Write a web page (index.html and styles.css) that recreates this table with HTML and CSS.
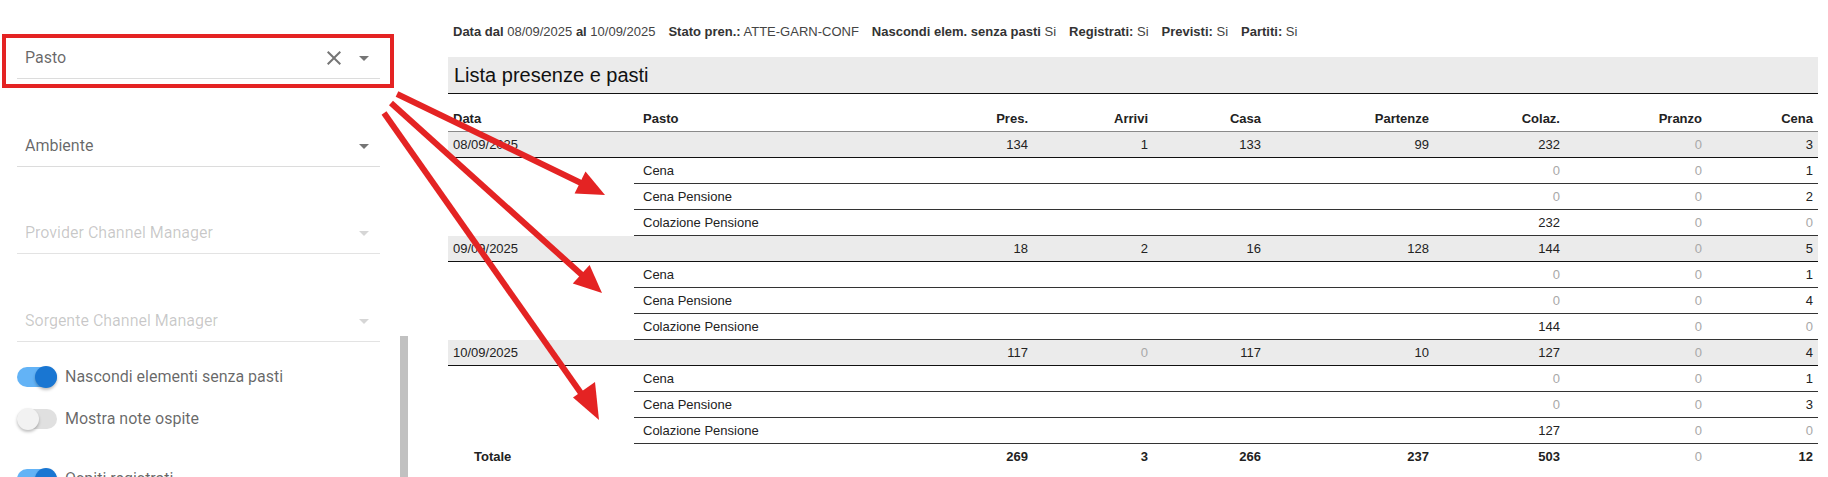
FILE: index.html
```html
<!DOCTYPE html>
<html lang="it">
<head>
<meta charset="utf-8">
<title>Lista presenze e pasti</title>
<link rel="stylesheet" href="styles.css">
</head>
<body>
<div class="page">
  <aside class="sidebar">
    <div class="field">
      <span class="field-label">Pasto</span>
      <svg class="icon icon-clear" viewBox="0 0 24 24" width="24" height="24"><path d="M19 6.41L17.59 5 12 10.59 6.41 5 5 6.41 10.59 12 5 17.59 6.41 19 12 13.41 17.59 19 19 17.59 13.41 12z"/></svg>
      <svg class="icon icon-caret" viewBox="0 0 24 24" width="24" height="24"><path d="M7 10l5 5 5-5z"/></svg>
    </div>
    <div class="field">
      <span class="field-label">Ambiente</span>
      <svg class="icon icon-caret" viewBox="0 0 24 24" width="24" height="24"><path d="M7 10l5 5 5-5z"/></svg>
    </div>
    <div class="field disabled">
      <span class="field-label">Provider Channel Manager</span>
      <svg class="icon icon-caret" viewBox="0 0 24 24" width="24" height="24"><path d="M7 10l5 5 5-5z"/></svg>
    </div>
    <div class="field disabled">
      <span class="field-label">Sorgente Channel Manager</span>
      <svg class="icon icon-caret" viewBox="0 0 24 24" width="24" height="24"><path d="M7 10l5 5 5-5z"/></svg>
    </div>
    <div class="switch on first">
      <span class="track"><span class="thumb"></span></span>
      <span class="switch-label">Nascondi elementi senza pasti</span>
    </div>
    <div class="switch off">
      <span class="track"><span class="thumb"></span></span>
      <span class="switch-label">Mostra note ospite</span>
    </div>
    <div class="switch on spaced">
      <span class="track"><span class="thumb"></span></span>
      <span class="switch-label">Ospiti registrati</span>
    </div>
    <div class="scroll-thumb"></div>
  </aside>

  <main class="report">
    <div class="filters">
      <span class="filter"><b>Data dal</b> 08/09/2025 <b>al</b> 10/09/2025</span>
      <span class="filter"><b>Stato pren.:</b> ATTE-GARN-CONF</span>
      <span class="filter"><b>Nascondi elem. senza pasti</b> Si</span>
      <span class="filter"><b>Registrati:</b> Si</span>
      <span class="filter"><b>Previsti:</b> Si</span>
      <span class="filter"><b>Partiti:</b> Si</span>
    </div>
    <div class="report-title">Lista presenze e pasti</div>
    <table class="report-table">
      <colgroup>
        <col class="c-data"><col class="c-pasto"><col class="c-pres"><col class="c-arrivi"><col class="c-casa"><col class="c-part"><col class="c-colaz"><col class="c-pranzo"><col class="c-cena">
      </colgroup>
      <thead>
        <tr>
          <th class="l">Data</th><th class="l pasto">Pasto</th><th>Pres.</th><th>Arrivi</th><th>Casa</th><th>Partenze</th><th>Colaz.</th><th>Pranzo</th><th>Cena</th>
        </tr>
      </thead>
      <tbody>
        <tr class="day"><td class="l">08/09/2025</td><td></td><td>134</td><td>1</td><td>133</td><td>99</td><td>232</td><td class="z">0</td><td>3</td></tr>
        <tr class="sub"><td class="blank"></td><td class="l pasto">Cena</td><td></td><td></td><td></td><td></td><td class="z">0</td><td class="z">0</td><td>1</td></tr>
        <tr class="sub"><td class="blank"></td><td class="l pasto">Cena Pensione</td><td></td><td></td><td></td><td></td><td class="z">0</td><td class="z">0</td><td>2</td></tr>
        <tr class="sub"><td class="blank"></td><td class="l pasto">Colazione Pensione</td><td></td><td></td><td></td><td></td><td>232</td><td class="z">0</td><td class="z">0</td></tr>

        <tr class="day"><td class="l">09/09/2025</td><td></td><td>18</td><td>2</td><td>16</td><td>128</td><td>144</td><td class="z">0</td><td>5</td></tr>
        <tr class="sub"><td class="blank"></td><td class="l pasto">Cena</td><td></td><td></td><td></td><td></td><td class="z">0</td><td class="z">0</td><td>1</td></tr>
        <tr class="sub"><td class="blank"></td><td class="l pasto">Cena Pensione</td><td></td><td></td><td></td><td></td><td class="z">0</td><td class="z">0</td><td>4</td></tr>
        <tr class="sub"><td class="blank"></td><td class="l pasto">Colazione Pensione</td><td></td><td></td><td></td><td></td><td>144</td><td class="z">0</td><td class="z">0</td></tr>

        <tr class="day"><td class="l">10/09/2025</td><td></td><td>117</td><td class="z">0</td><td>117</td><td>10</td><td>127</td><td class="z">0</td><td>4</td></tr>
        <tr class="sub"><td class="blank"></td><td class="l pasto">Cena</td><td></td><td></td><td></td><td></td><td class="z">0</td><td class="z">0</td><td>1</td></tr>
        <tr class="sub"><td class="blank"></td><td class="l pasto">Cena Pensione</td><td></td><td></td><td></td><td></td><td class="z">0</td><td class="z">0</td><td>3</td></tr>
        <tr class="sub"><td class="blank"></td><td class="l pasto">Colazione Pensione</td><td></td><td></td><td></td><td></td><td>127</td><td class="z">0</td><td class="z">0</td></tr>
      </tbody>
      <tfoot>
        <tr class="total"><td class="l totale">Totale</td><td></td><td>269</td><td>3</td><td>266</td><td>237</td><td>503</td><td class="z">0</td><td>12</td></tr>
      </tfoot>
    </table>
  </main>

  <svg class="annotations" width="1828" height="477" viewBox="0 0 1828 477">
    <rect x="4" y="36" width="388" height="50" fill="none" stroke="#e42323" stroke-width="4"/>
    <g stroke="#e42323" stroke-width="6" stroke-linecap="butt" fill="none">
      <line x1="397" y1="94" x2="581" y2="183"/>
      <line x1="391" y1="103" x2="582" y2="275"/>
      <line x1="384" y1="113" x2="583" y2="396"/>
    </g>
    <g fill="#e42323">
      <polygon points="605,195 574.6,193.6 585.5,171.6"/>
      <polygon points="602,293 572.8,283.6 589.6,265"/>
      <polygon points="599,420 573,397.5 595,382"/>
    </g>
  </svg>
</div>
</body>
</html>
```

FILE: styles.css
```css
html, body {
  margin: 0;
  padding: 0;
  background: #fff;
}

.page {
  position: relative;
  display: flex;
  width: 1828px;
  height: 477px;
  overflow: hidden;
}

/* ---------- sidebar ---------- */
.sidebar {
  position: relative;
  display: flex;
  flex-direction: column;
  align-items: flex-start;
  flex: 0 0 410px;
  box-sizing: border-box;
  padding: 23px 0 0 17px;
  font-family: Roboto, "Noto Sans", sans-serif;
  font-size: 16px;
}

.field {
  display: flex;
  align-items: flex-end;
  flex: 0 0 56px;
  box-sizing: border-box;
  width: 363px;
  height: 56px;
  padding: 0 4px 8px 8px;
  border-bottom: 1px solid #dcdcdc;
  color: rgba(0, 0, 0, 0.6);
}

.field + .field {
  margin-top: 31.7px;
}

.field-label {
  flex: 1;
  line-height: 24px;
  white-space: nowrap;
}

.icon {
  flex: 0 0 24px;
  fill: rgba(0, 0, 0, 0.54);
}

.icon-clear {
  margin-right: 6px;
}

.field.disabled {
  color: rgba(0, 0, 0, 0.22);
  border-bottom-color: #e3e3e3;
}

.field.disabled .icon {
  fill: rgba(0, 0, 0, 0.16);
}

.switch {
  display: flex;
  align-items: center;
  flex: 0 0 28px;
  height: 28px;
  color: rgba(0, 0, 0, 0.6);
  white-space: nowrap;
}

.switch.first {
  margin-top: 21px;
}

.switch.off {
  margin-top: 14px;
}

.switch.spaced {
  margin-top: 32px;
}

.track {
  position: relative;
  display: block;
  width: 40px;
  height: 20px;
  border-radius: 10px;
  margin-right: 8px;
}

.thumb {
  position: absolute;
  top: -1px;
  width: 22px;
  height: 22px;
  border-radius: 50%;
  box-shadow: 0 2px 3px rgba(0, 0, 0, 0.25);
}

.switch.on .track {
  background: #63b3f6;
}

.switch.on .thumb {
  right: 0;
  background: #1976d2;
}

.switch.off .track {
  background: #e0e0e0;
}

.switch.off .thumb {
  left: 0;
  background: #f2f2f2;
}

.switch-label {
  line-height: 24px;
}

.scroll-thumb {
  position: absolute;
  left: 400px;
  top: 336px;
  width: 8px;
  bottom: 0;
  background: #c1c1c1;
}

/* ---------- report ---------- */
.report {
  margin-left: 38px;
  width: 1370px;
  font-family: "Liberation Sans", Arial, sans-serif;
  color: #222;
}

.filters {
  display: flex;
  padding: 24px 0 0 5px;
  height: 57px;
  box-sizing: border-box;
  font-size: 13px;
  line-height: 16px;
  color: #444;
  white-space: nowrap;
}

.filter {
  margin-right: 13px;
}

.filter b {
  color: #333;
}

.report-title {
  height: 36px;
  padding-left: 6px;
  background: #ebebeb;
  border-bottom: 1px solid #111;
  font-size: 20px;
  line-height: 36px;
  color: #111;
}

.report-table {
  width: 1370px;
  table-layout: fixed;
  border-collapse: separate;
  border-spacing: 0;
  font-size: 13px;
  color: #222;
}

.c-data { width: 186px; }
.c-pasto { width: 296px; }
.c-pres { width: 103px; }
.c-arrivi { width: 120px; }
.c-casa { width: 113px; }
.c-part { width: 168px; }
.c-colaz { width: 131px; }
.c-pranzo { width: 142px; }
.c-cena { width: 111px; }

.report-table th,
.report-table td {
  padding: 0 5px;
  line-height: 25px;
  text-align: right;
  white-space: nowrap;
  border-bottom: 1px solid #333;
}

.report-table th {
  padding-top: 12px;
  vertical-align: bottom;
  font-weight: bold;
  border-bottom-color: #8a8a8a;
}

.report-table .l {
  text-align: left;
}

.report-table .pasto {
  padding-left: 9px;
}

.day td {
  background: #ebebeb;
  border-bottom-color: #111;
}

.sub td.blank {
  border-bottom-color: transparent;
}

.report-table .z {
  color: #a8a8a8;
}

.total td {
  border-bottom: none;
  font-weight: bold;
}

.total td.z {
  font-weight: normal;
}

.total .totale {
  padding-left: 26px;
}

/* ---------- annotations ---------- */
.annotations {
  position: absolute;
  left: 0;
  top: 0;
  pointer-events: none;
}
```
